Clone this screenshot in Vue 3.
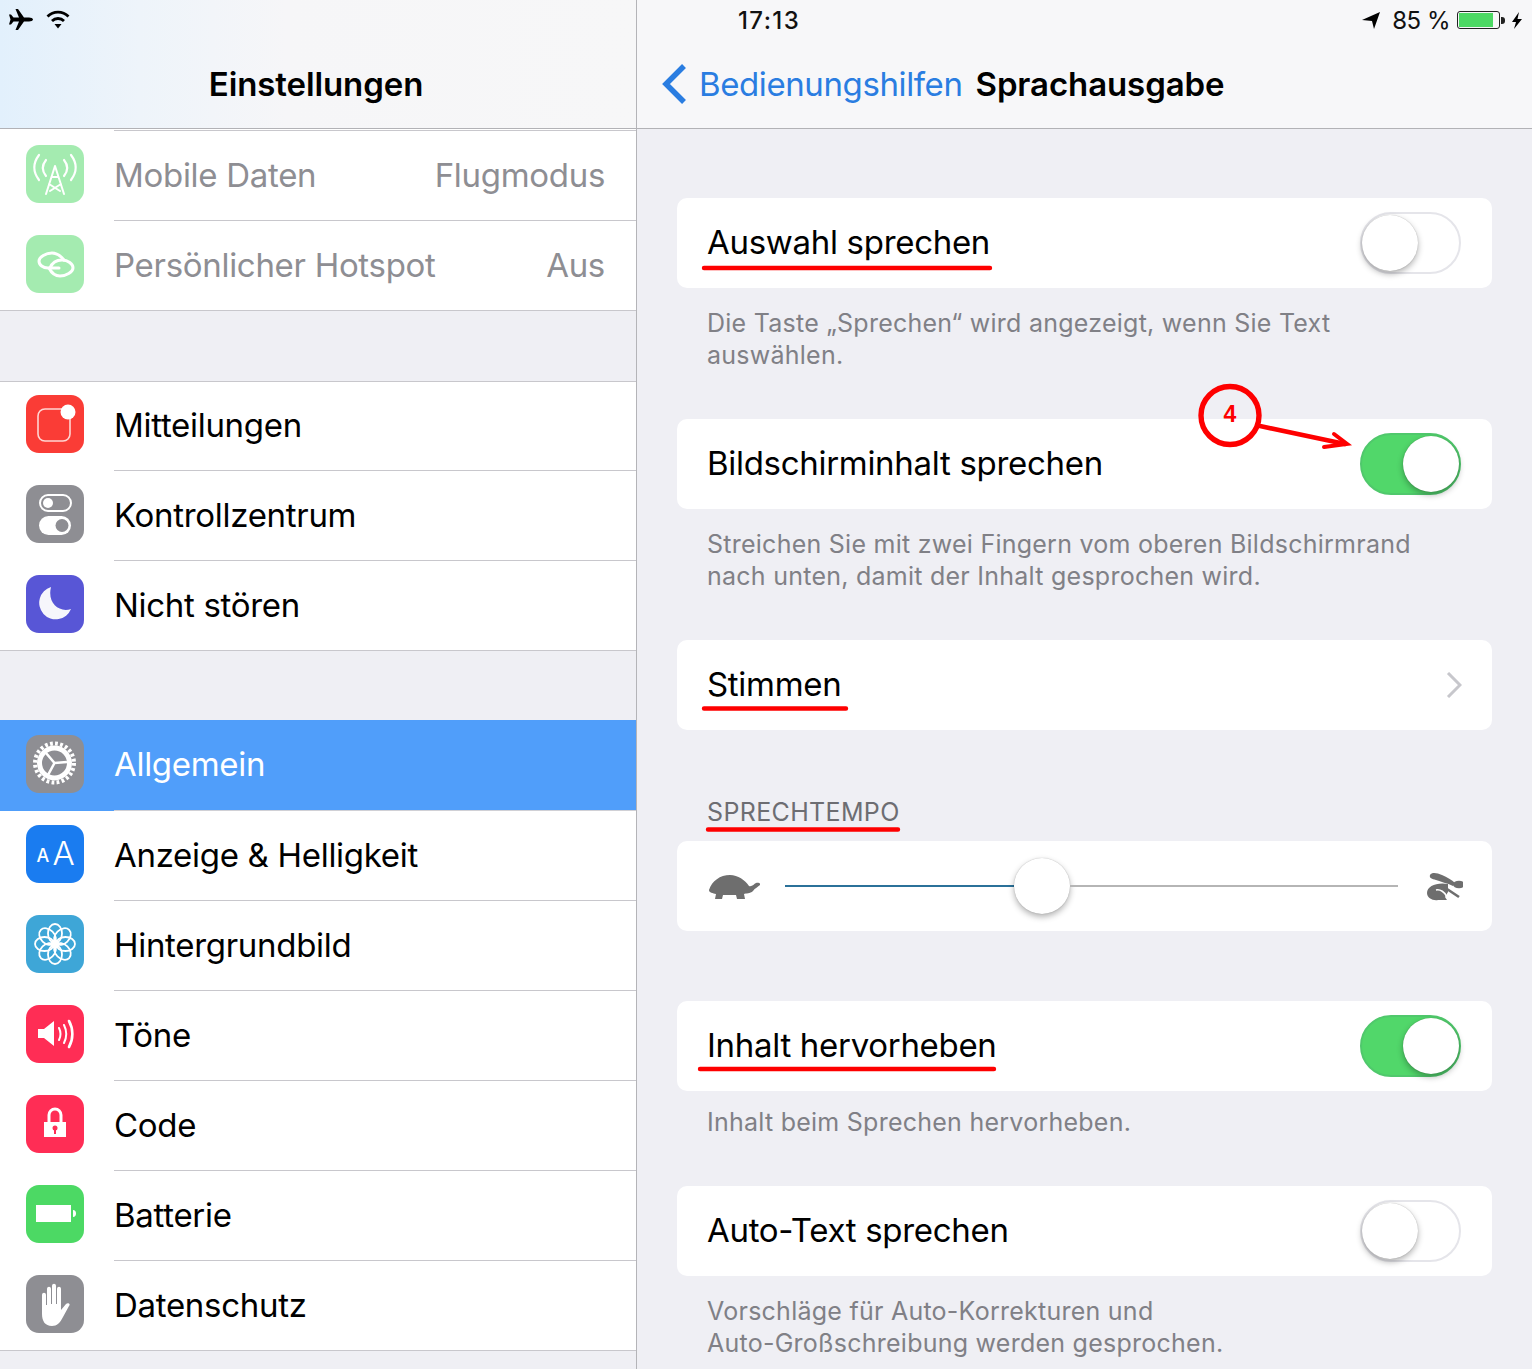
<script setup>
const groups = [
  {
    cls: 'first',
    rows: [
      { id: 'cell', label: 'Mobile Daten', value: 'Flugmodus', dim: true },
      { id: 'hotspot', label: 'Persönlicher Hotspot', value: 'Aus', dim: true },
    ],
  },
  {
    cls: 'second',
    rows: [
      { id: 'notify', label: 'Mitteilungen' },
      { id: 'control', label: 'Kontrollzentrum' },
      { id: 'moon', label: 'Nicht stören' },
    ],
  },
  {
    cls: 'third',
    rows: [
      { id: 'gear', label: 'Allgemein', active: true },
      { id: 'display', label: 'Anzeige & Helligkeit' },
      { id: 'flower', label: 'Hintergrundbild' },
      { id: 'sound', label: 'Töne' },
      { id: 'lock', label: 'Code' },
      { id: 'battery', label: 'Batterie' },
      { id: 'hand', label: 'Datenschutz' },
    ],
  },
]

const petals = [0, 45, 90, 135, 180, 225, 270, 315]
</script>

<template>
  <div class="page">
    <aside class="master">
      <header class="master-head">
        <div class="status">
          <svg class="plane" width="26" height="24" viewBox="0 0 26 24">
            <path d="M25 11.500c0-1.200-2-2-4-2h-5L10 1H7.500L11 9.500H5.500L3 6.500H1l1.500 5-1.500 5h2l2.500-3H11L7.500 22H10l6-8.500h5c2 0 4-.8 4-2z" />
          </svg>
          <svg class="wifi" width="24" height="20" viewBox="0 0 24 20">
            <path d="M1.500 7.500a15 15 0 0 1 21 0M6 12a8.500 8.500 0 0 1 12 0" fill="none" stroke="#000" stroke-width="2.800" />
            <path d="M8.500 15h7L12 19.500z" />
          </svg>
        </div>
        <h1 class="master-title">Einstellungen</h1>
      </header>

      <section v-for="group in groups" :key="group.cls" class="group" :class="group.cls">
        <div v-if="group.cls === 'first'" class="top-line"></div>
        <div v-for="row in group.rows" :key="row.id" class="row" :class="{ dim: row.dim, active: row.active }">
          <svg class="icon" :class="'icon-' + row.id" width="58" height="58" viewBox="0 0 58 58">
            <template v-if="row.id === 'cell'">
              <g fill="none" stroke="#fff" stroke-linecap="round">
                <path d="M29 21L20 49M29 21L38 49M25.500 32h7M23 39l11 7M35 39l-11 7" stroke-width="2" />
                <path d="M13 10c-6 8-6 17 0 25M45 10c6 8 6 17 0 25M20 15c-4 5-4 11 0 16M38 15c4 5 4 11 0 16" stroke-width="2.200" />
              </g>
            </template>
            <template v-else-if="row.id === 'hotspot'">
              <g fill="none" stroke="#fff" stroke-width="3" stroke-linecap="round">
                <path d="M38 25C34 20 30 18 26 18 20 18 13 22 13 26c0 4 4 7 9 7h11" />
                <path d="M24 33c2-5 6-8 12-8 6 0 11 4 11 8 0 4-7 8-13 8-5 0-9-4-11-8" />
              </g>
            </template>
            <template v-else-if="row.id === 'notify'">
              <path d="M36 14H19c-4 0-7 3-7 7v18c0 4 3 7 7 7h18c4 0 7-3 7-7V24" fill="none" stroke="#ffd5d2" stroke-width="1.600" />
              <circle cx="42" cy="17" r="7.500" fill="#fff" />
            </template>
            <template v-else-if="row.id === 'control'">
              <rect x="14" y="10" width="31" height="16" rx="8" fill="none" stroke="#fff" stroke-width="2" />
              <circle cx="22" cy="18" r="5" fill="#fff" />
              <rect x="13" y="31" width="32" height="19" rx="9.500" fill="#fff" />
              <circle cx="36" cy="40.500" r="6.500" fill="#8e8e93" />
            </template>
            <template v-else-if="row.id === 'moon'">
              <path d="M25 12A16.500 16.500 0 1 0 45 34C33 38 21 28 25 12z" fill="#f6f6fb" />
            </template>
            <template v-else-if="row.id === 'gear'">
              <g fill="none" stroke="#fff">
                <circle cx="28.500" cy="28" r="19.500" stroke-width="4" stroke-dasharray="2.800 2.305" />
                <circle cx="28.500" cy="28" r="15" stroke-width="5" />
                <path d="M28.500 28L20 18M28.500 28L41 27M28.500 28L22 40" stroke-width="2.600" />
              </g>
            </template>
            <template v-else-if="row.id === 'display'">
              <text x="17" y="37" class="aa small">A</text>
              <text x="37.500" y="40" class="aa big">A</text>
            </template>
            <template v-else-if="row.id === 'flower'">
              <g fill="none" stroke="#fff" stroke-width="1.800">
                <ellipse v-for="a in petals" :key="a" cx="29" cy="18.500" rx="7" ry="9.500" :transform="`rotate(${a} 29 29)`" />
                <circle cx="29" cy="29" r="3.500" />
              </g>
            </template>
            <template v-else-if="row.id === 'sound'">
              <path d="M12 24h6l10-8v25l-10-8h-6z" fill="#fff" />
              <g fill="none" stroke="#fff" stroke-width="2" stroke-linecap="round">
                <path d="M33 23c2 4 2 8 0 12M38 20c3 6 3 12 0 18" />
                <path d="M43 16c4.500 8 4.500 18 0 26" stroke-width="2.600" />
              </g>
            </template>
            <template v-else-if="row.id === 'lock'">
              <path d="M23 28v-8a6 6 0 0 1 12 0v8" fill="none" stroke="#fff" stroke-width="3" />
              <rect x="18" y="27" width="22" height="15" fill="#fff" />
              <circle cx="29" cy="33" r="2.500" fill="#ff2d55" />
              <rect x="28" y="34" width="2" height="5" fill="#ff2d55" />
            </template>
            <template v-else-if="row.id === 'battery'">
              <rect x="10" y="20" width="35" height="17" fill="#fff" />
              <path d="M47 25c2 0 3 1.500 3 3.500S49 32 47 32z" fill="#fff" />
            </template>
            <template v-else>
              <path d="M16 20c0-3 4-3 4 0v10h1V14c0-3 4-3 4 0v15h1V11c0-3 4-3 4 0v18h1V14c0-3 4-3 4 0v21l5-6c2-2 5 0 3 2l-6 11c-3 6-6 9-11 9-7 0-10-5-10-12z" fill="#fff" />
            </template>
          </svg>
          <div class="row-body">
            <span class="row-label">{{ row.label }}</span>
            <span v-if="row.value" class="row-value">{{ row.value }}</span>
          </div>
        </div>
      </section>
    </aside>

    <main class="detail">
      <header class="detail-head">
        <div class="status status-right">
          <span class="time">17:13</span>
          <div class="status-tail">
            <svg width="18" height="17" viewBox="0 0 18 17"><path d="M0 8L18 0 12 17 10 9z" /></svg>
            <span class="percent">85 %</span>
            <div class="batt"><div class="batt-fill"></div></div>
            <div class="batt-nub"></div>
            <svg class="bolt" width="10" height="17" viewBox="0 0 10 17"><path d="M7 0L0 10h4l-2 7 8-10H5.500z" /></svg>
          </div>
        </div>
        <div class="nav">
          <svg width="26" height="42" viewBox="0 0 26 42"><path d="M23 3L5 21l18 18" fill="none" stroke="#2a7de1" stroke-width="5.500" /></svg>
          <span class="back">Bedienungshilfen</span>
          <span class="nav-title">Sprachausgabe</span>
        </div>
      </header>

      <div class="detail-body">
        <div class="card">
          <span class="card-label">Auswahl sprechen</span>
          <div class="toggle"><div class="knob"></div></div>
        </div>
        <p class="note">Die Taste „Sprechen“ wird angezeigt, wenn Sie Text<br />auswählen.</p>

        <div class="card">
          <span class="card-label">Bildschirminhalt sprechen</span>
          <div class="toggle on"><div class="knob"></div></div>
        </div>
        <p class="note">Streichen Sie mit zwei Fingern vom oberen Bildschirmrand<br />nach unten, damit der Inhalt gesprochen wird.</p>

        <div class="card">
          <span class="card-label">Stimmen</span>
          <svg class="chevron" width="16" height="26" viewBox="0 0 16 26"><path d="M2 1l12 12L2 25" fill="none" stroke="#c7c7cc" stroke-width="3" /></svg>
        </div>

        <div class="section-title">SPRECHTEMPO</div>
        <div class="card slider-card">
          <svg width="52" height="27" viewBox="0 0 52 27">
            <path d="M1 17C4 8 12 2 22 2c8 0 15 5 19 11 3 1 5-2 7-3 3-1 5 1 4 2-2 2-5 3-7 6-3 3-7 2-9 3l1 5h-8l-1-4H15l-1 4H7l1-5c-3-1-7-1-7-4z" fill="#6e6e6e" />
          </svg>
          <div class="track">
            <div class="track-done"></div>
            <div class="slider-knob"></div>
            <div class="track-rest"></div>
          </div>
          <svg width="40" height="32" viewBox="0 0 40 32">
            <g fill="#6e6e6e">
              <path d="M7 5C9 2 14 3 19 5c5 2 10 5 13 8l-2 3c-6-3-12-4-17-6-4-1-7-2-6-5z" />
              <ellipse cx="36" cy="14.500" rx="6" ry="3.800" />
              <path d="M25 14C14 12 4 16 4 23c0 5 6 8 11 7h9l-2-3 3-5z" />
            </g>
            <path d="M13 20c4-1 9 2 11 7" fill="none" stroke="#fff" stroke-width="1.600" />
            <path d="M21 17l15 10" fill="none" stroke="#6e6e6e" stroke-width="2.600" />
          </svg>
        </div>

        <div class="card card-gap">
          <span class="card-label">Inhalt hervorheben</span>
          <div class="toggle on"><div class="knob"></div></div>
        </div>
        <p class="note note-single">Inhalt beim Sprechen hervorheben.</p>

        <div class="card">
          <span class="card-label">Auto-Text sprechen</span>
          <div class="toggle"><div class="knob"></div></div>
        </div>
        <p class="note">Vorschläge für Auto-Korrekturen und<br />Auto-Großschreibung werden gesprochen.</p>
      </div>
    </main>

    <!-- red hand-drawn markup on top of the screenshot -->
    <svg class="markup" width="1532" height="1369" viewBox="0 0 1532 1369">
      <g fill="none" stroke="#fe0000" stroke-linecap="round">
        <path d="M704 268H990M704 708.500H846M708 829.500H898M700 1069H994" stroke-width="4.400" />
        <circle cx="1230" cy="415.500" r="29" stroke-width="5.400" />
        <path d="M1260 426L1345 444" stroke-width="4.600" />
        <path d="M1334 434L1347 444 1324 447" stroke-width="4" />
      </g>
      <text x="1230" y="421.500" class="mark-num">4</text>
    </svg>
  </div>
</template>

<style>
html, body { margin: 0; background: #efeff4; overflow: hidden; }
</style>

<style scoped>
.page {
  position: relative;
  display: flex;
  width: 1532px;
  height: 1369px;
  overflow: hidden;
  font-family: Inter, "Liberation Sans", sans-serif;
  color: #000;
  background: #efeff4;
}

/* left column */
.master {
  width: 636px;
  flex: none;
  border-right: 1px solid #b4b4b8;
}

.master-head {
  height: 128px;
  border-bottom: 1px solid #b2b2b6;
  background: linear-gradient(90deg, #e2f0fc 0%, #eef4fa 22%, #f6f6f8 45%, #f7f7f8 100%);
}

.status {
  height: 40px;
  display: flex;
  align-items: center;
  padding-left: 8px;
  gap: 12px;
}

.plane { margin-top: -1px; }
.wifi { margin-top: -3px; }

.master-title {
  margin: 0;
  padding-right: 4px;
  height: 88px;
  line-height: 88px;
  text-align: center;
  font-size: 33px;
  font-weight: 600;
  letter-spacing: -0.1px;
}

.group {
  background: #fff;
  box-shadow: inset 0 1px 0 #c8c7cc;
}

.group.first {
  padding-top: 1px;
  box-shadow: none;
}

.group.second { margin-top: 70px; }
.group.third { margin-top: 69px; box-shadow: none; }

.top-line {
  height: 1px;
  margin-left: 114px;
  background: #c8c7cc;
}

.row {
  height: 90px;
  display: flex;
  padding-left: 26px;
  box-sizing: border-box;
}

.third .row:first-child { height: 91px; }

.row .icon {
  flex: none;
  align-self: center;
  margin-bottom: 4px;
  margin-right: 30px;
  border-radius: 13px;
}

.row-body {
  flex: 1;
  display: flex;
  align-items: center;
  justify-content: space-between;
  padding: 0 31px 2px 0;
  border-bottom: 1px solid #c8c7cc;
  font-size: 33px;
  letter-spacing: -0.3px;
}

.row:last-child { position: relative; }

.row:last-child::after {
  content: "";
  position: absolute;
  left: 0;
  right: 0;
  bottom: 0;
  height: 1px;
  background: #c8c7cc;
}

.row.active {
  background: #509efa;
  color: #fff;
}

.row.active .row-body { border-bottom-color: #d0d0d5; }

.row.dim .row-label,
.row.dim .row-value { color: #8e8e93; }
.row.dim .icon { opacity: 0.5; }
.row-value { color: #8e8e93; }

.icon-cell, .icon-hotspot, .icon-battery { background: #4cd964; }
.icon-notify { background: #fa3c36; }
.icon-control, .icon-gear, .icon-hand { background: #8e8e93; }
.icon-moon { background: #5856d6; }
.icon-display { background: #1a7cf0; }
.icon-flower { background: #3ea6d7; }
.icon-sound, .icon-lock { background: #ff2d55; }

.aa {
  font-family: Inter, sans-serif;
  fill: #fff;
  text-anchor: middle;
}

.aa.small { font-size: 18px; font-weight: 500; }
.aa.big { font-size: 33px; font-weight: 300; }

/* right column */
.detail {
  flex: 1;
  min-width: 0;
}

.detail-head {
  height: 128px;
  border-bottom: 1px solid #b2b2b6;
  background: #f7f7f9;
}

.status-right {
  justify-content: space-between;
  padding: 0 10px 0 101px;
  font-size: 24px;
  color: #111;
}

.time {
  font-weight: 500;
  letter-spacing: 1.4px;
}

.status-tail {
  display: flex;
  align-items: center;
}

.status-tail svg { flex: none; }

.percent {
  margin-left: 12px;
  margin-right: 7px;
  letter-spacing: -0.5px;
}

.batt {
  width: 43px;
  height: 18px;
  box-sizing: border-box;
  border: 1px solid #222;
  border-radius: 3px;
  padding: 1px;
}

.batt-fill {
  width: 34px;
  height: 14px;
  background: #4cd964;
}

.batt-nub {
  width: 4px;
  height: 7px;
  margin-left: 1px;
  background: #222;
  border-radius: 0 3px 3px 0;
}

.bolt { margin-left: 7px; }

.nav {
  height: 88px;
  display: flex;
  align-items: center;
  padding-left: 24px;
  font-size: 33px;
}

.back {
  margin-left: 12px;
  color: #2a7de1;
  letter-spacing: -0.4px;
}

.nav-title {
  margin-left: 13px;
  font-weight: 600;
  letter-spacing: -0.1px;
}

.detail-body {
  padding: 69px 40px 0;
}

.card {
  height: 90px;
  display: flex;
  align-items: center;
  justify-content: space-between;
  padding: 0 31px 0 30px;
  box-sizing: border-box;
  background: #fff;
  border-radius: 10px;
}

.card-label {
  margin-top: -2px;
  font-size: 33px;
  letter-spacing: -0.3px;
}

.chevron { margin-right: -1px; }

.note {
  margin: 0;
  padding: 19px 30px 48px;
  font-size: 25px;
  line-height: 32px;
  letter-spacing: 0.25px;
  color: #808086;
}

.note-single { padding-top: 15px; }

.toggle {
  position: relative;
  width: 101px;
  height: 62px;
  flex: none;
  box-sizing: border-box;
  border: 2px solid #e5e5ea;
  border-radius: 31px;
  background: #fff;
}

.toggle.on {
  border-color: #50c86c;
  background: #51d76a;
}

.knob {
  position: absolute;
  left: 0;
  top: 1px;
  width: 56px;
  height: 56px;
  border-radius: 50%;
  background: #fff;
  box-shadow: 0 3px 6px rgba(0, 0, 0, 0.3), 0 0 1px rgba(0, 0, 0, 0.3);
}

.toggle.on .knob {
  left: 41px;
}

.section-title {
  padding: 0 30px;
  margin-top: 64px;
  height: 47px;
  line-height: 36px;
  font-size: 25px;
  letter-spacing: 0.35px;
  color: #6d6d72;
}

.slider-card {
  padding: 0 29px 0 31px;
  justify-content: flex-start;
}

.track {
  flex: 1;
  display: flex;
  align-items: center;
  margin: 0 25px;
}

.track-done {
  width: 229px;
  height: 2px;
  background: #2b7199;
}

.slider-knob {
  width: 56px;
  height: 56px;
  flex: none;
  border-radius: 50%;
  background: #fff;
  box-shadow: 0 3px 6px rgba(0, 0, 0, 0.3), 0 0 1px rgba(0, 0, 0, 0.3);
}

.track-rest {
  flex: 1;
  height: 2px;
  background: #b5b5b5;
}

.card-gap { margin-top: 70px; }

.markup {
  position: absolute;
  left: 0;
  top: 0;
  pointer-events: none;
}

.mark-num {
  font-family: "Liberation Sans", sans-serif;
  font-size: 23px;
  font-weight: 700;
  fill: #fe0000;
  text-anchor: middle;
}
</style>
